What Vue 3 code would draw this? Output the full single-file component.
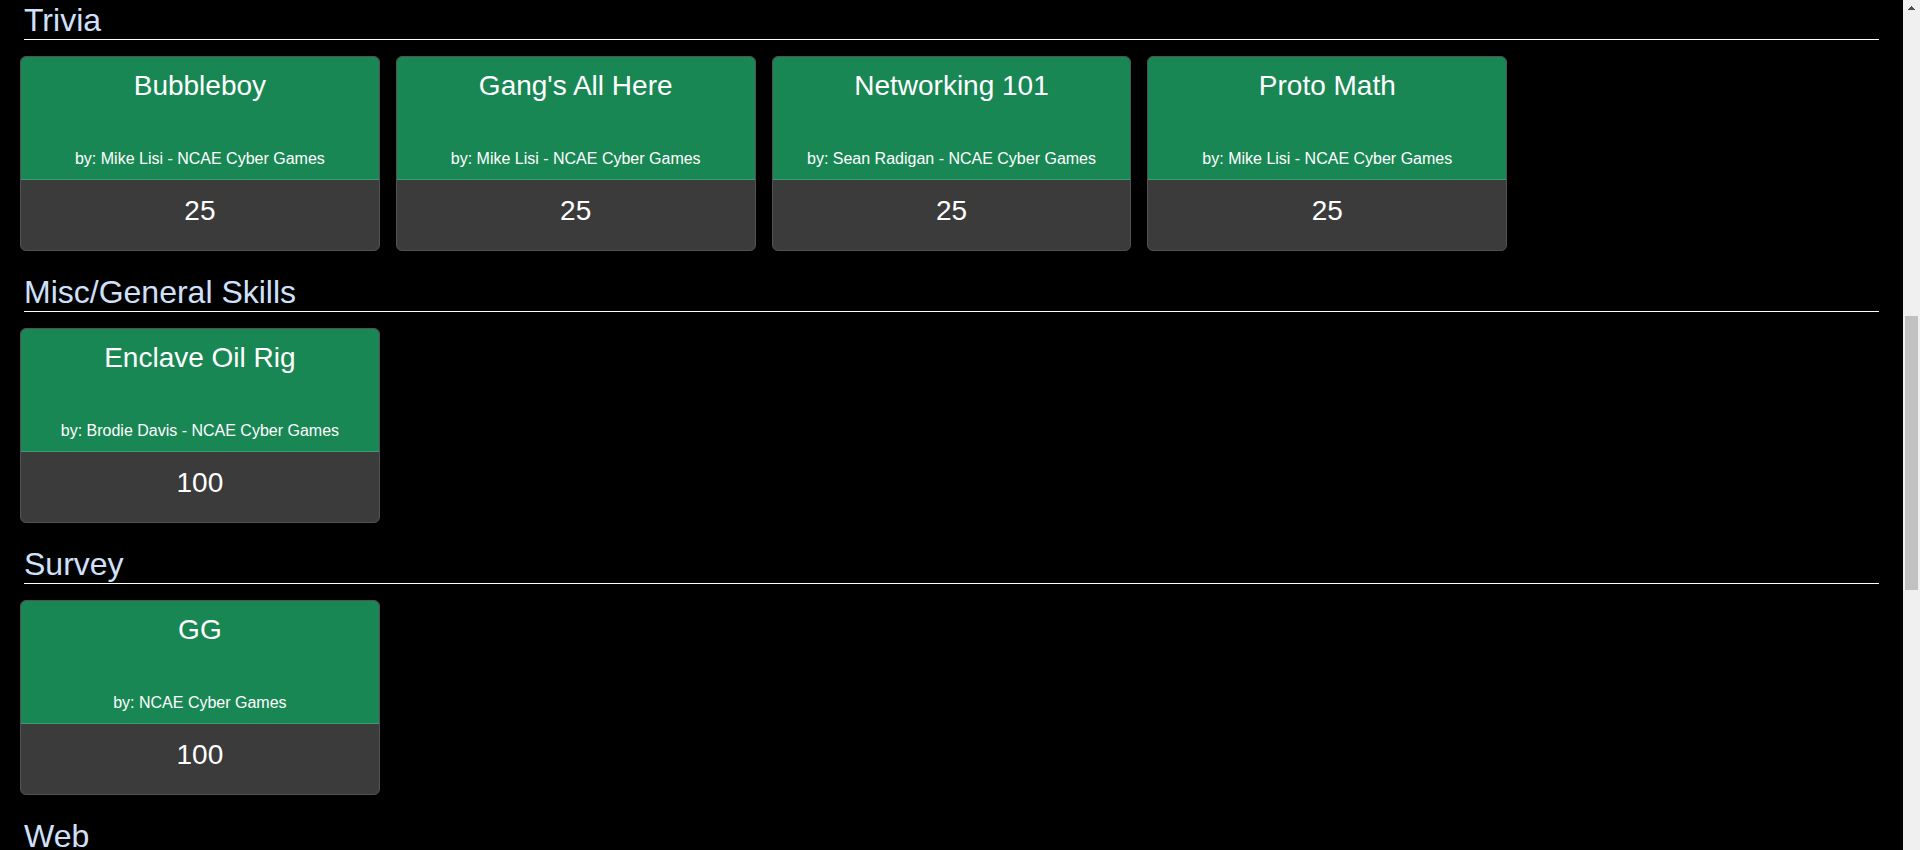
<script setup>
const categories = [
  {
    name: 'Trivia',
    challenges: [
      { title: 'Bubbleboy', author: 'Mike Lisi - NCAE Cyber Games', points: 25 },
      { title: "Gang's All Here", author: 'Mike Lisi - NCAE Cyber Games', points: 25 },
      { title: 'Networking 101', author: 'Sean Radigan - NCAE Cyber Games', points: 25 },
      { title: 'Proto Math', author: 'Mike Lisi - NCAE Cyber Games', points: 25 },
    ],
  },
  {
    name: 'Misc/General Skills',
    challenges: [
      { title: 'Enclave Oil Rig', author: 'Brodie Davis - NCAE Cyber Games', points: 100 },
    ],
  },
  {
    name: 'Survey',
    challenges: [{ title: 'GG', author: 'NCAE Cyber Games', points: 100 }],
  },
  { name: 'Web', challenges: [] },
]
</script>

<template>
  <div class="viewport">
    <main class="board">
      <section v-for="category in categories" :key="category.name" class="category">
        <h2 class="category-name">{{ category.name }}</h2>
        <div class="cards">
          <article v-for="challenge in category.challenges" :key="challenge.title" class="card">
            <header class="card-header">
              <h3 class="card-title">{{ challenge.title }}</h3>
              <p class="card-author">by: {{ challenge.author }}</p>
            </header>
            <p class="card-points">{{ challenge.points }}</p>
          </article>
        </div>
      </section>
    </main>
    <div class="scrollbar" aria-hidden="true">
      <svg class="arrow" width="17" height="17" viewBox="0 0 17 17" shape-rendering="crispEdges">
        <path d="M8 6h1v1h1v1h1v1h1v1H5V9h1V8h1V7h1z" fill="#505050" />
      </svg>
      <div class="before"></div>
      <div class="thumb"></div>
      <div class="after"></div>
    </div>
  </div>
</template>

<style>
body {
  margin: 0;
  background: #000;
}
</style>

<style scoped>
.viewport {
  display: flex;
  height: 100vh;
  overflow: hidden;
  background: #000;
  font-family: "Liberation Sans", Arial, sans-serif;
  font-size: 16px;
  line-height: 24px;
  color: #fff;
}

.board {
  flex: 1;
  min-width: 0;
  padding: 1px 20px 0;
}

.category {
  margin-bottom: 22px;
}

.category-name {
  margin: 0 4px 16px;
  border-bottom: 1px solid #fff;
  font-size: 32px;
  font-weight: 400;
  line-height: 38px;
  color: #d1e0fa;
}

.cards {
  display: grid;
  grid-template-columns: repeat(5, minmax(0, 1fr));
  gap: 16px;
}

.card {
  overflow: hidden;
  border: 1px solid #525252;
  border-radius: 6px;
  background: #3b3b3b;
  text-align: center;
}

.card-header {
  display: flex;
  flex-direction: column;
  justify-content: space-between;
  gap: 44px;
  padding: 12px 16px 8px;
  border-bottom: 1px solid #3f9a70;
  background: #198754;
}

.card-title,
.card-points {
  margin: 0;
  font-size: 28px;
  font-weight: 400;
  line-height: 34px;
}

.card-author {
  margin: 0;
}

.card-points {
  padding: 14px 16px 22px;
}

.scrollbar {
  display: flex;
  flex-direction: column;
  width: 17px;
  background: #f0f0f0;
}

.arrow {
  display: block;
  flex: none;
}

.before {
  flex: 299;
}

.thumb {
  flex: 274;
  margin: 0 2px;
  background: #c1c1c1;
}

.after {
  flex: 260;
}
</style>
